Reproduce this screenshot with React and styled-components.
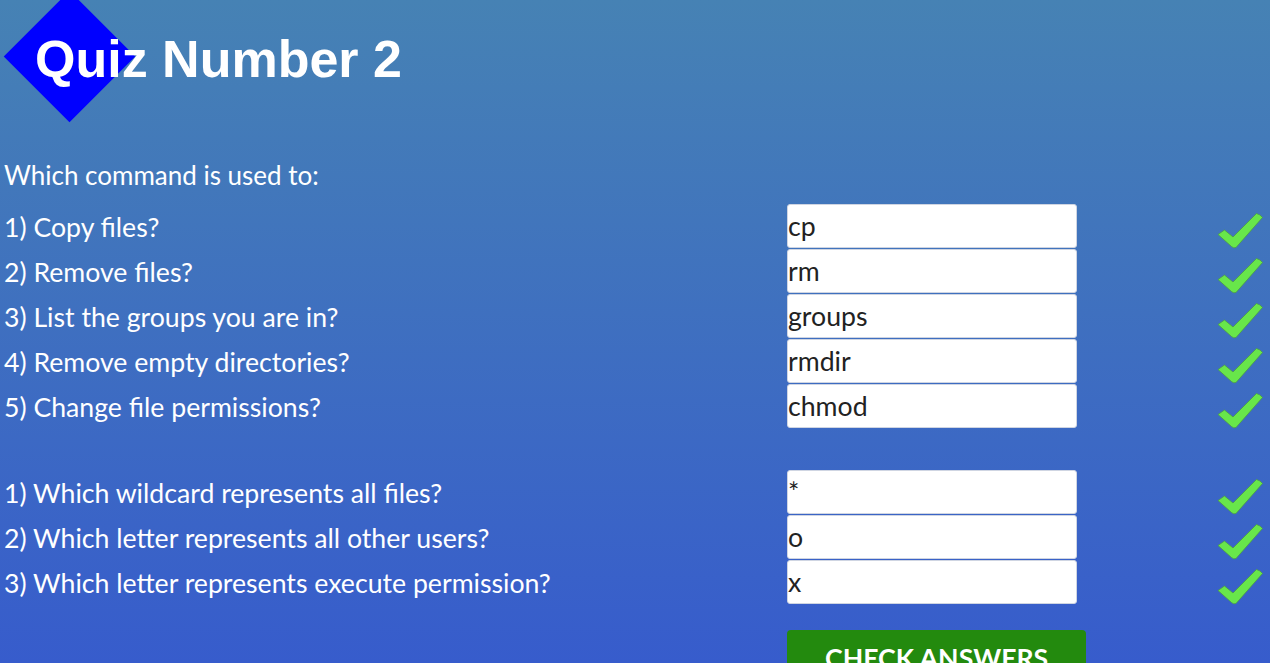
import React from 'react';
import styled, { createGlobalStyle } from 'styled-components';

const GlobalStyle = createGlobalStyle`
  html, body {
    margin: 0;
    padding: 0;
  }
  body {
    min-height: 663px;
    background: linear-gradient(to bottom, #4682b4 0px, #375ccc 663px);
    background-color: #375ccc;
    font-family: Lato, "Open Sans", sans-serif;
    color: #fff;
    overflow: hidden;
  }
`;

const Page = styled.div`
  padding: 0 0 40px 4px;
`;

const Header = styled.header`
  position: relative;
  padding: 29px 0 0 31px;

  &::before {
    content: '';
    position: absolute;
    left: 19px;
    top: 10px;
    width: 93px;
    height: 93px;
    background: #0000ff;
    transform: rotate(45deg);
    z-index: 0;
  }
`;

const Title = styled.h1`
  position: relative;
  z-index: 1;
  margin: 0;
  font-family: "Liberation Sans", Arial, sans-serif;
  font-weight: 700;
  font-size: 52px;
  line-height: 60px;
  color: #fff;
`;

const Intro = styled.p`
  margin: 71px 0 13px;
  font-size: 26px;
  line-height: 31px;
`;

const QuestionGrid = styled.div`
  display: grid;
  grid-template-columns: 783px 290px 1fr;
  grid-auto-rows: 45px;
  margin-top: ${props => props.$gap || 0}px;
`;

const Label = styled.label`
  align-self: center;
  font-size: 26.67px;
  line-height: 32px;
  white-space: nowrap;
`;

const AnswerInput = styled.input`
  box-sizing: border-box;
  width: 290px;
  height: 44px;
  margin: 0;
  padding: 0;
  border: 1px solid #cfd5e2;
  border-radius: 3px;
  background: #fff;
  font-family: Lato, "Open Sans", sans-serif;
  font-size: 26.67px;
  color: #222;
  outline: none;
`;

const CheckCell = styled.div`
  justify-self: end;
  align-self: start;
  padding: 8px 7px 0 0;
  line-height: 0;
`;

const ButtonRow = styled.div`
  display: grid;
  grid-template-columns: 783px auto;
  margin-top: 25px;
`;

const CheckButton = styled.button`
  grid-column: 2;
  justify-self: start;
  padding: 13px 38px 16px;
  border: none;
  border-radius: 4px;
  background: #238a0e;
  color: #fff;
  font-family: Lato, "Open Sans", sans-serif;
  font-weight: 700;
  font-size: 26.67px;
  line-height: 31px;
  text-transform: uppercase;
  cursor: pointer;
`;

const Tick = () => (
  <svg width="46" height="37" viewBox="0 0 46 37">
    <path
      d="M1 22.5 L7.5 18 L16 25 L39.5 1.5 Q43.5 2.5 45.5 5.5 L19 35.5 Q16.5 36.5 14.5 34.5 Z"
      fill="#68e64a"
      stroke="#4c9a48"
      strokeWidth="0.8"
      strokeLinejoin="round"
    />
  </svg>
);

const commandQuestions = [
  { q: '1) Copy files?', a: 'cp' },
  { q: '2) Remove files?', a: 'rm' },
  { q: '3) List the groups you are in?', a: 'groups' },
  { q: '4) Remove empty directories?', a: 'rmdir' },
  { q: '5) Change file permissions?', a: 'chmod' },
];

const otherQuestions = [
  { q: '1) Which wildcard represents all files?', a: '*' },
  { q: '2) Which letter represents all other users?', a: 'o' },
  { q: '3) Which letter represents execute permission?', a: 'x' },
];

const QuestionBlock = ({ items, gap }) => (
  <QuestionGrid $gap={gap}>
    {items.map((item, i) => (
      <React.Fragment key={i}>
        <Label>{item.q}</Label>
        <AnswerInput type="text" defaultValue={item.a} />
        <CheckCell>
          <Tick />
        </CheckCell>
      </React.Fragment>
    ))}
  </QuestionGrid>
);

const App = () => (
  <>
    <GlobalStyle />
    <Page>
      <Header>
        <Title>Quiz Number 2</Title>
      </Header>
      <Intro>Which command is used to:</Intro>
      <QuestionBlock items={commandQuestions} />
      <QuestionBlock items={otherQuestions} gap={41} />
      <ButtonRow>
        <CheckButton>Check Answers</CheckButton>
      </ButtonRow>
    </Page>
  </>
);

export default App;
